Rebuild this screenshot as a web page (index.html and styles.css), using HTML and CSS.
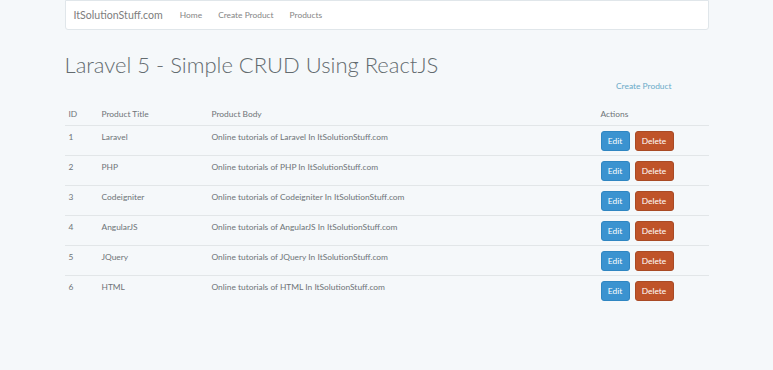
FILE: index.html
```html
<!DOCTYPE html>
<html lang="en">
<head>
    <meta charset="UTF-8">
    <meta name="viewport" content="width=device-width, initial-scale=1.0">
    <title>Laravel 5 - Simple CRUD Using ReactJS</title>

    <link rel="stylesheet" href="styles.css">
</head>
<body>
    <div class="container">
        <nav class="navbar">
            <a class="navbar-brand" href="#">ItSolutionStuff.com</a>
            <ul class="nav">
                <li><a href="#">Home</a></li>
                <li><a href="#">Create Product</a></li>
                <li><a href="#">Products</a></li>
            </ul>
        </nav>

        <h1 class="title">Laravel 5 - Simple CRUD Using ReactJS</h1>

        <div class="toolbar">
            <a class="create-link" href="#">Create Product</a>
        </div>

        <table class="table">
            <colgroup>
                <col class="col-id">
                <col class="col-title">
                <col class="col-body">
                <col class="col-actions">
            </colgroup>
            <thead>
                <tr>
                    <th>ID</th>
                    <th>Product Title</th>
                    <th>Product Body</th>
                    <th>Actions</th>
                </tr>
            </thead>
            <tbody>
                <tr>
                    <td>1</td>
                    <td>Laravel</td>
                    <td>Online tutorials of Laravel In ItSolutionStuff.com</td>
                    <td class="actions"><a class="btn btn-primary" href="#">Edit</a><button class="btn btn-danger">Delete</button></td>
                </tr>
                <tr>
                    <td>2</td>
                    <td>PHP</td>
                    <td>Online tutorials of PHP In ItSolutionStuff.com</td>
                    <td class="actions"><a class="btn btn-primary" href="#">Edit</a><button class="btn btn-danger">Delete</button></td>
                </tr>
                <tr>
                    <td>3</td>
                    <td>Codeigniter</td>
                    <td>Online tutorials of Codeigniter In ItSolutionStuff.com</td>
                    <td class="actions"><a class="btn btn-primary" href="#">Edit</a><button class="btn btn-danger">Delete</button></td>
                </tr>
                <tr>
                    <td>4</td>
                    <td>AngularJS</td>
                    <td>Online tutorials of AngularJS In ItSolutionStuff.com</td>
                    <td class="actions"><a class="btn btn-primary" href="#">Edit</a><button class="btn btn-danger">Delete</button></td>
                </tr>
                <tr>
                    <td>5</td>
                    <td>JQuery</td>
                    <td>Online tutorials of JQuery In ItSolutionStuff.com</td>
                    <td class="actions"><a class="btn btn-primary" href="#">Edit</a><button class="btn btn-danger">Delete</button></td>
                </tr>
                <tr>
                    <td>6</td>
                    <td>HTML</td>
                    <td>Online tutorials of HTML In ItSolutionStuff.com</td>
                    <td class="actions"><a class="btn btn-primary" href="#">Edit</a><button class="btn btn-danger">Delete</button></td>
                </tr>
            </tbody>
        </table>
    </div>
</body>
</html>
```

FILE: styles.css
```css
html{
    box-sizing: border-box;
    font-family: 'Lato', 'Open Sans', sans-serif;
    font-size: 10px;
}

*,
*:after,
*:before{
    box-sizing: inherit;
}

body{
    margin: 0;
    background-color: #f5f8fa;
    color: #6e7478;
}

a{
    text-decoration: none;
}

.container{
    width: 644px;
    margin: 0 auto;
}

/* navbar */
.navbar{
    display: flex;
    align-items: center;
    height: 30px;
    background-color: #fff;
    border: 1px solid #e0e6ea;
    border-radius: 0 0 3px 3px;
}

.navbar-brand{
    padding-left: 8px;
    margin-right: 9px;
    font-size: 10.6px;
    color: #7d7d7d;
}

.nav{
    display: flex;
    margin: 0;
    padding: 0;
    list-style: none;
}

.nav a{
    display: block;
    padding: 0 8px;
    font-size: 8.4px;
    color: #858585;
}

/* title */
.title{
    margin: 21px 0 0;
    font-size: 22px;
    font-weight: 300;
    line-height: 28px;
    color: #636b6f;
}

.toolbar{
    text-align: right;
    padding-right: 37px;
    line-height: 12px;
}

.create-link{
    font-size: 8.4px;
    color: #6aaac8;
}

/* table */
.table{
    width: 100%;
    margin-top: 11px;
    border-collapse: collapse;
    table-layout: fixed;
    font-size: 8.4px;
}

.col-id{ width: 33px; }
.col-title{ width: 110px; }
.col-body{ width: 389px; }
.col-actions{ width: 112px; }

.table th,
.table td{
    padding: 5px 4px 4px;
    line-height: 13px;
    text-align: left;
    vertical-align: top;
    font-weight: 400;
}

.table tbody td{
    border-top: 1px solid #e2e6e8;
}

.table tbody td.actions{
    line-height: 0;
}

.btn{
    display: inline-block;
    height: 20px;
    padding: 0;
    border: 1px solid transparent;
    border-radius: 3px;
    font-family: inherit;
    font-size: 8.4px;
    line-height: 18px;
    text-align: center;
    color: #fff;
    vertical-align: top;
    cursor: pointer;
}

.btn-primary{
    width: 29px;
    background-color: #3b93d0;
    border-color: #2f86c2;
}

.btn-danger{
    width: 39px;
    margin-left: 5px;
    background-color: #bf5329;
    border-color: #a94a25;
}
```
